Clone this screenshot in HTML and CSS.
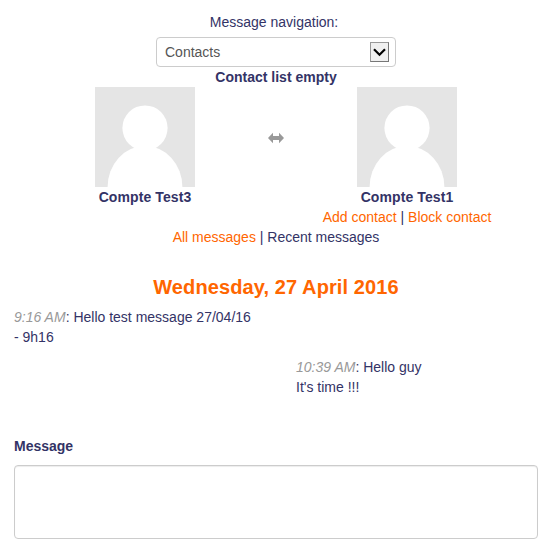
FILE: index.html
```html
<!DOCTYPE html>
<html lang="en">
<head>
    <title>Messages</title>
    <meta charset="UTF-8">
    <link rel="stylesheet" href="styles.css">
</head>
<body>
    <div class="container">
        <div class="navigation">
            <label class="nav-label" for="nav">Message navigation:&nbsp;</label>
            <div class="select-box">
                <select id="nav" name="nav">
                    <option>Contacts</option>
                </select>
                <span class="select-arrow">
                    <svg width="13" height="9" viewBox="0 0 13 9"><path d="M1 1.2L6.5 6.7L12 1.2" fill="none" stroke="#000" stroke-width="2.2"/></svg>
                </span>
            </div>
            <strong>Contact list empty</strong>
        </div>
        <div class="people">
            <div class="person">
                <svg class="avatar" viewBox="0 0 100 100">
                    <rect width="100" height="100" fill="#e5e5e5"/>
                    <circle cx="50" cy="41" r="22.6" fill="#fff"/>
                    <ellipse cx="50" cy="100" rx="37.4" ry="41" fill="#fff"/>
                </svg>
                <strong class="name">Compte Test3</strong>
            </div>
            <svg class="exchange" viewBox="0 0 16 12"><path d="M0 6L5 0.8V4H11V0.8L16 6L11 11.2V8H5V11.2Z" fill="#999"/></svg>
            <div class="person">
                <svg class="avatar" viewBox="0 0 100 100">
                    <rect width="100" height="100" fill="#e5e5e5"/>
                    <circle cx="50" cy="41" r="22.6" fill="#fff"/>
                    <ellipse cx="50" cy="100" rx="37.4" ry="41" fill="#fff"/>
                </svg>
                <strong class="name">Compte Test1</strong>
                <div><a href="#">Add contact</a> | <a href="#">Block contact</a></div>
            </div>
        </div>
        <div class="filter"><a href="#">All messages</a> | Recent messages</div>
        <h4 class="date">Wednesday, 27 April 2016</h4>
        <div class="message received"><em class="time">9:16 AM</em>: Hello test message 27/04/16 - 9h16</div>
        <div class="message sent"><em class="time">10:39 AM</em>: Hello guy<br>It's time !!!</div>
        <form class="message-form">
            <label for="message">Message</label>
            <textarea id="message" name="message"></textarea>
        </form>
    </div>
</body>
</html>
```
FILE: styles.css
```css
* {
    box-sizing: border-box;
}
body {
    margin: 0;
    background-color: #fff;
    color: #333366;
    font-family: Arial, "Liberation Sans", sans-serif;
    font-size: 14px;
    line-height: 20px;
}
a {
    color: #ff6600;
    text-decoration: none;
}
.container {
    width: 524px;
    margin-left: 14px;
    padding-top: 12px;
}
.navigation {
    display: flex;
    flex-direction: column;
    align-items: center;
}
.select-box {
    position: relative;
    width: 240px;
    height: 30px;
    margin-top: 5px;
}
.select-box select {
    display: block;
    width: 100%;
    height: 30px;
    padding: 4px 8px;
    border: 1px solid #ccc;
    border-radius: 4px;
    background-color: #fff;
    color: #555;
    font: inherit;
    appearance: none;
}
.select-arrow {
    position: absolute;
    top: 5px;
    right: 7px;
    display: flex;
    align-items: center;
    justify-content: center;
    width: 19px;
    height: 20px;
    border: 1px solid #777;
    border-top-color: #999;
    border-left-color: #999;
    background-color: #f0f0f0;
    pointer-events: none;
}
.people {
    display: flex;
    align-items: flex-start;
}
.person {
    display: flex;
    flex: 1;
    flex-direction: column;
    align-items: center;
}
.avatar {
    width: 100px;
    height: 100px;
}
.name {
    letter-spacing: 0.1px;
}
.exchange {
    width: 16px;
    height: 12px;
    margin: 45px -8px 0;
}
.filter {
    text-align: center;
}
.date {
    margin: 30px 0 10px;
    color: #ff6600;
    font-size: 20px;
    line-height: 20px;
    letter-spacing: 0.1px;
    text-align: center;
}
.message {
    width: 242px;
    margin-bottom: 10px;
}
.sent {
    margin-left: auto;
}
.time {
    color: #999;
}
.message-form {
    padding-top: 29px;
}
.message-form label {
    display: block;
    margin-bottom: 9px;
    font-weight: bold;
}
.message-form textarea {
    display: block;
    width: 100%;
    height: 74px;
    padding: 4px 6px;
    border: 1px solid #ccc;
    border-radius: 4px;
    box-shadow: inset 0 1px 1px rgba(0,0,0,0.075);
    font: inherit;
    resize: none;
}
```
